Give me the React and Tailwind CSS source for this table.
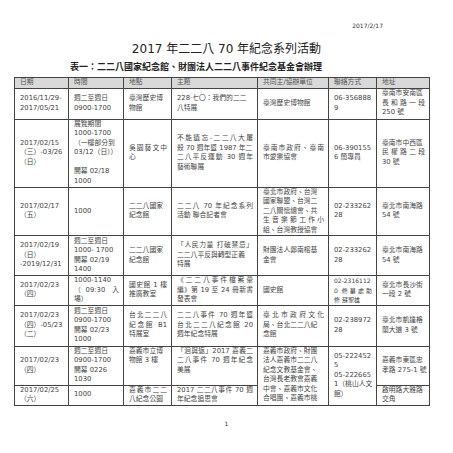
import React from "react";

// lines starting with "|" are stretched to the cell width (distributed CJK spacing)
const rows = [
  {
    h: "h-[31px]",
    cells: [
      ["2016/11/29-", "2017/05/21"],
      ["週二至週日", "0900-1700"],
      ["臺灣歷史博", "物館"],
      ["228·七〇：我們的二二", "八特展"],
      ["臺灣歷史博物館"],
      ["06-356888", "9"],
      ["臺南市安南區", "|長和路一段", "250 號"],
    ],
  },
  {
    h: "h-[68px]",
    cells: [
      ["2017/02/15", "（三）-03/26", "（日）"],
      ["展覽期間", "1000-1700", "（一樓部分到", "03/12（日））", "", "開幕 02/18", "1000"],
      ["|吳園藝文中", "心"],
      ["|不能遺忘-二二八大屠", "殺 70 週年暨 1987 年二", "|二八平反運動 30 週年", "藝術聯展"],
      ["|臺南市政府、臺南", "市愛樂協會"],
      ["06-390155", "6 簡專員"],
      ["臺南市中西區", "|民權路二段", "30 號"],
    ],
  },
  {
    h: "h-[48px]",
    cells: [
      ["2017/02/17", "（五）"],
      ["1000"],
      ["二二八國家", "紀念館"],
      ["|二二八 70 年紀念系列", "活動 聯合記者會"],
      ["臺北市政府、台灣", "國家聯盟、台灣二", "二八關懷總會、共", "|生音樂節工作小", "組、台灣教授協會"],
      ["02-233262", "28"],
      ["臺北市南海路", "54 號"],
    ],
  },
  {
    h: "h-[40px]",
    cells: [
      ["2017/02/19", "（日）", "-2019/12/31"],
      ["週二至週日", "1000- 1700", "開幕 02/19", "1400"],
      ["二二八國家", "紀念館"],
      ["|「人民力量 打破禁忌」", "二二八平反與轉型正義", "特展"],
      ["財團法人鄭南榕基", "金會"],
      ["02-233262", "28"],
      ["臺北市南海路", "54 號"],
    ],
  },
  {
    h: "h-[27px]",
    cells: [
      ["2017/02/23", "（四）"],
      ["1000-1140", "|（09:30 入", "場）"],
      ["|國史館 1 樓", "推廣教室"],
      ["|《二二八事件檔案彙", "|編》第 19 至 24 冊新書", "發表會"],
      ["國史館"],
      { small: true, lines: ["02-2316112", "|0 修纂處助", "修 蘇聖雄"] },
      ["臺北市長沙街", "一段 2 號"],
    ],
  },
  {
    h: "h-[41px]",
    cells: [
      ["2017/02/23", "（四）-05/23", "（二）"],
      ["週二至週日", "0900-1700", "開幕 02/23", "1000"],
      ["|台北二二八", "|紀念館 B1", "特展室"],
      ["|二二八事件 70 週年暨", "|台北二二八紀念館 20", "週年紀念特展"],
      ["|臺北市政府文化", "局、台北二二八紀", "念館"],
      ["02-238972", "28"],
      ["臺北市凱達格", "蘭大道 3 號"],
    ],
  },
  {
    h: "h-[38px]",
    cells: [
      ["2017/02/23", "（四）"],
      ["週二至週日", "0900-1700", "開幕 0226", "1030"],
      { top: true, lines: ["嘉義市立博", "物館 3 樓"] },
      { top: true, lines: ["|「洄與返」2017 嘉義二", "|二八事件 70 週年紀念", "美展"] },
      { rs: 2, top: true, lines: ["嘉義市政府、財團", "法人嘉義市二二八", "紀念文教基金會、", "台灣長老教會嘉義", "中會、嘉義市文化", "合唱團、嘉義市桃"] },
      { rs: 2, lines: ["05-222452", "5", "05-222665", "1（桃山人文", "館）"] },
      ["嘉義市東區忠", "孝路 275-1 號"],
    ],
  },
  {
    h: "h-[20px]",
    cells: [
      ["2017/02/25", "（六）"],
      ["1000"],
      ["|嘉義市二二", "八紀念公園"],
      ["|2017 二二八事件 70 週", "年紀念追思會"],
      ["啟明路大雅路", "交角"],
    ],
  },
];

const headers = ["日期", "時間", "地點", "主題", "共同主/協辦單位", "聯絡方式", "地址"];

function Lines({ lines }) {
  return lines.map((l, i) => {
    const j = l.startsWith("|");
    const t = j ? l.slice(1) : l;
    return (
      <div
        key={i}
        className={j ? "whitespace-nowrap text-justify [text-align-last:justify]" : "whitespace-nowrap"}
      >
        {t || "\u00a0"}
      </div>
    );
  });
}

export default function App() {
  return (
    <div className="w-[453px] h-[453px] bg-white overflow-hidden font-['DejaVu_Sans','Noto_Sans_CJK_TC',sans-serif] text-[#444]">
      <div className="pt-[22px] pr-[70px] text-right text-[6px] leading-[8px] text-[#333]">2017/2/17</div>
      <div className="mt-[11px] text-center text-[12px] leading-[16px] text-[#222]">
        2017 年二二八 70 年紀念系列活動
      </div>
      <div className="mt-[4px] pr-[61px] text-center text-[9px] leading-[12px] font-bold text-[#222]">
        表一：二二八國家紀念館、財團法人二二八事件紀念基金會辦理
      </div>

      <table className="mt-[4px] ml-[14px] w-[415px] table-fixed border-collapse text-[6.8px] leading-[9.5px]">
        <colgroup>
          <col className="w-[54px]" />
          <col className="w-[55px]" />
          <col className="w-[48px]" />
          <col className="w-[86px]" />
          <col className="w-[71px]" />
          <col className="w-[48px]" />
          <col className="w-[53px]" />
        </colgroup>
        <thead>
          <tr className="h-[9px] bg-[#d9d9d9]">
            {headers.map((h) => (
              <th key={h} className="border border-[#444] pl-[5px] pr-[4px] py-0 text-left font-normal text-[#555]">
                {h}
              </th>
            ))}
          </tr>
        </thead>
        <tbody>
          {rows.map((r, ri) => (
            <tr key={ri} className={r.h}>
              {r.cells.map((c, ci) => {
                const cell = Array.isArray(c) ? { lines: c } : c;
                return (
                  <td
                    key={ci}
                    rowSpan={cell.rs || 1}
                    className={
                      "border border-[#444] pl-[5px] pr-[4px] py-0 overflow-hidden " +
                      (cell.top ? "align-top " : "align-middle ") +
                      (cell.small ? "text-[6px]" : "")
                    }
                  >
                    <Lines lines={cell.lines} />
                  </td>
                );
              })}
            </tr>
          ))}
        </tbody>
      </table>

      <div className="mt-[13px] text-center text-[6px] leading-[10px] text-[#333]">1</div>
    </div>
  );
}
